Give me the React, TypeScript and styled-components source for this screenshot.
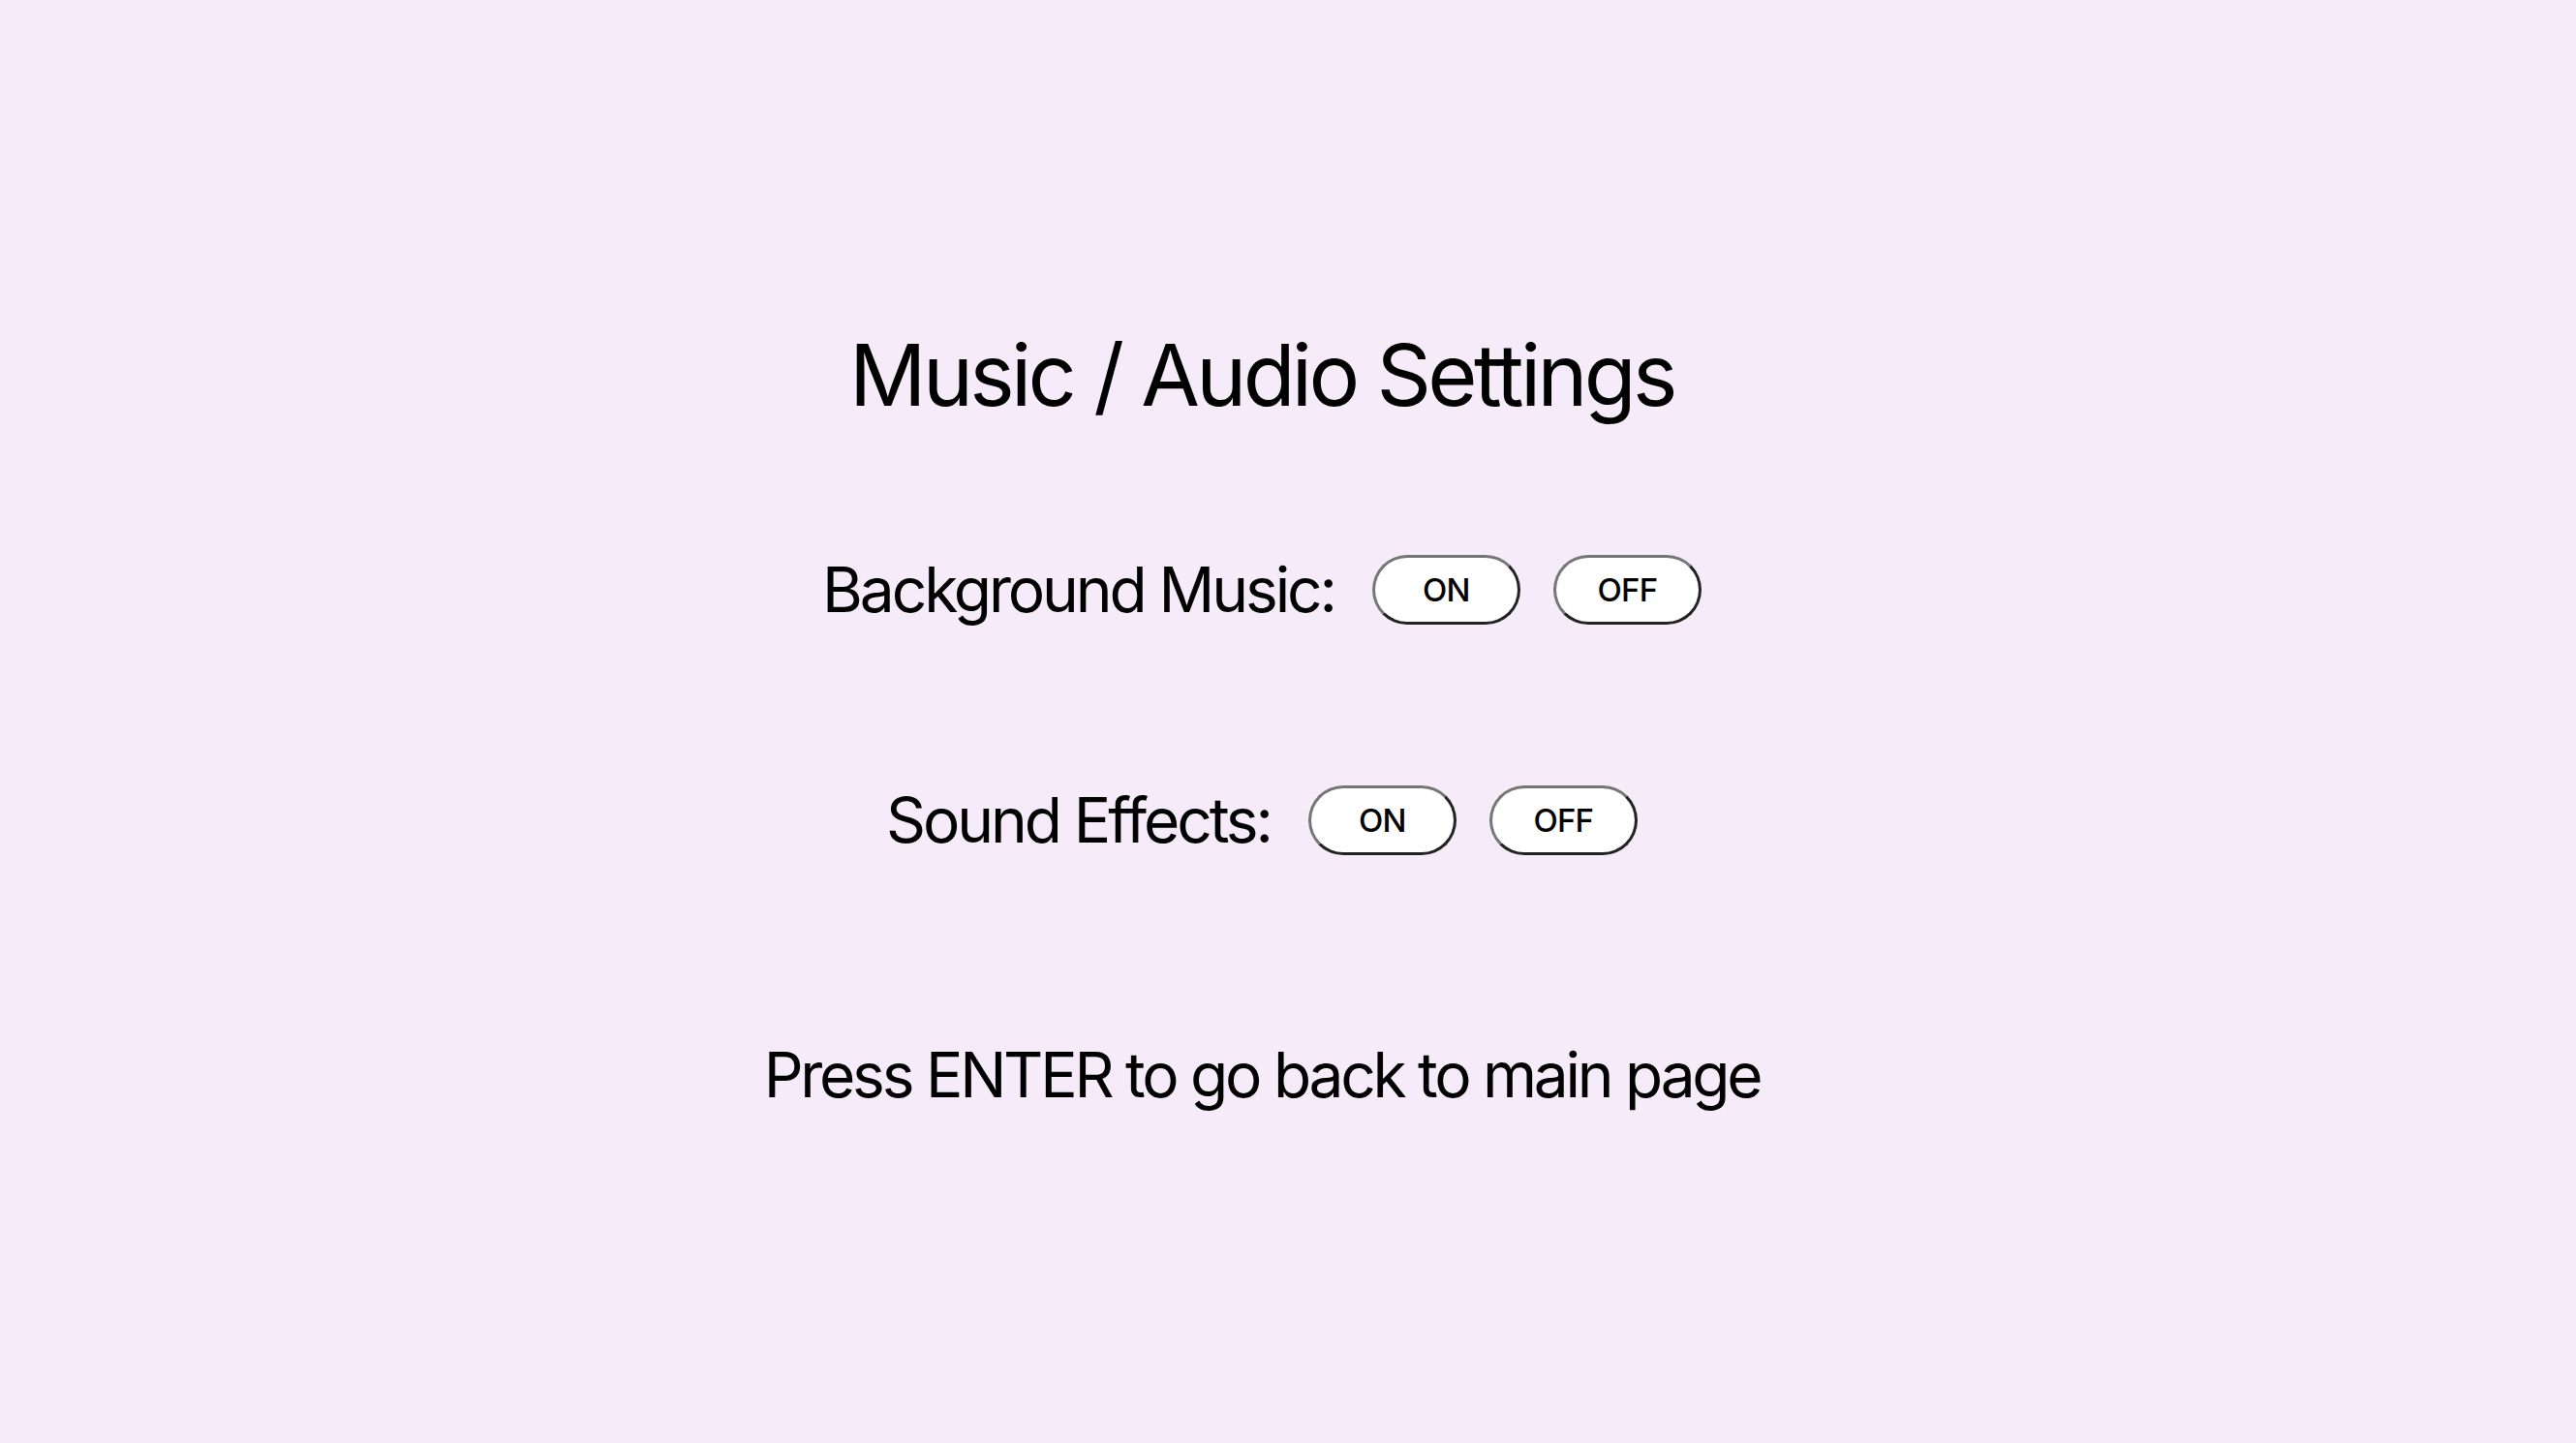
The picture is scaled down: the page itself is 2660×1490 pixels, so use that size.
import React from "react";
import styled, { createGlobalStyle } from "styled-components";

const GlobalStyle = createGlobalStyle`
  html, body {
    margin: 0;
    padding: 0;
    background: #f6ebf8;
  }
  body {
    font-family: Inter, "Noto Sans", "Liberation Sans", sans-serif;
    color: #000;
  }
`;

const Page = styled.main`
  box-sizing: border-box;
  width: 2606px;
  min-height: 1490px;
  padding-top: 343px;
  display: flex;
  flex-direction: column;
  align-items: center;
  background: #f6ebf8;
`;

const Title = styled.h1`
  margin: 0;
  font-size: 88px;
  font-weight: 400;
  line-height: 1;
  letter-spacing: -3.7px;
`;

const Row = styled.div<{ $top: number }>`
  display: flex;
  align-items: center;
  margin-top: ${(p) => p.$top}px;
  height: 72px;
`;

const Label = styled.span`
  font-size: 64px;
  line-height: 1;
  margin-right: 39px;
  letter-spacing: -3.1px;
`;

const ToggleButton = styled.button`
  box-sizing: border-box;
  width: 153px;
  height: 72px;
  margin: 0;
  padding: 0;
  background: #ffffff;
  border: 3px solid;
  border-color: #767676 #222222 #222222 #767676;
  border-radius: 36px;
  font-family: Inter, "Noto Sans", "Liberation Sans", sans-serif;
  font-size: 33px;
  font-weight: 500;
  letter-spacing: -0.8px;
  color: #000;
  cursor: pointer;
  & + & {
    margin-left: 34px;
  }
`;

const Hint = styled.p`
  margin: 195px 0 0;
  font-size: 64px;
  line-height: 1;
  letter-spacing: -3.25px;
`;

export default function App() {
  return (
    <>
      <GlobalStyle />
      <Page>
        <Title>Music / Audio Settings</Title>
        <Row $top={142}>
          <Label>Background Music:</Label>
          <ToggleButton>ON</ToggleButton>
          <ToggleButton>OFF</ToggleButton>
        </Row>
        <Row $top={166}>
          <Label>Sound Effects:</Label>
          <ToggleButton>ON</ToggleButton>
          <ToggleButton>OFF</ToggleButton>
        </Row>
        <Hint>Press ENTER to go back to main page</Hint>
      </Page>
    </>
  );
}
